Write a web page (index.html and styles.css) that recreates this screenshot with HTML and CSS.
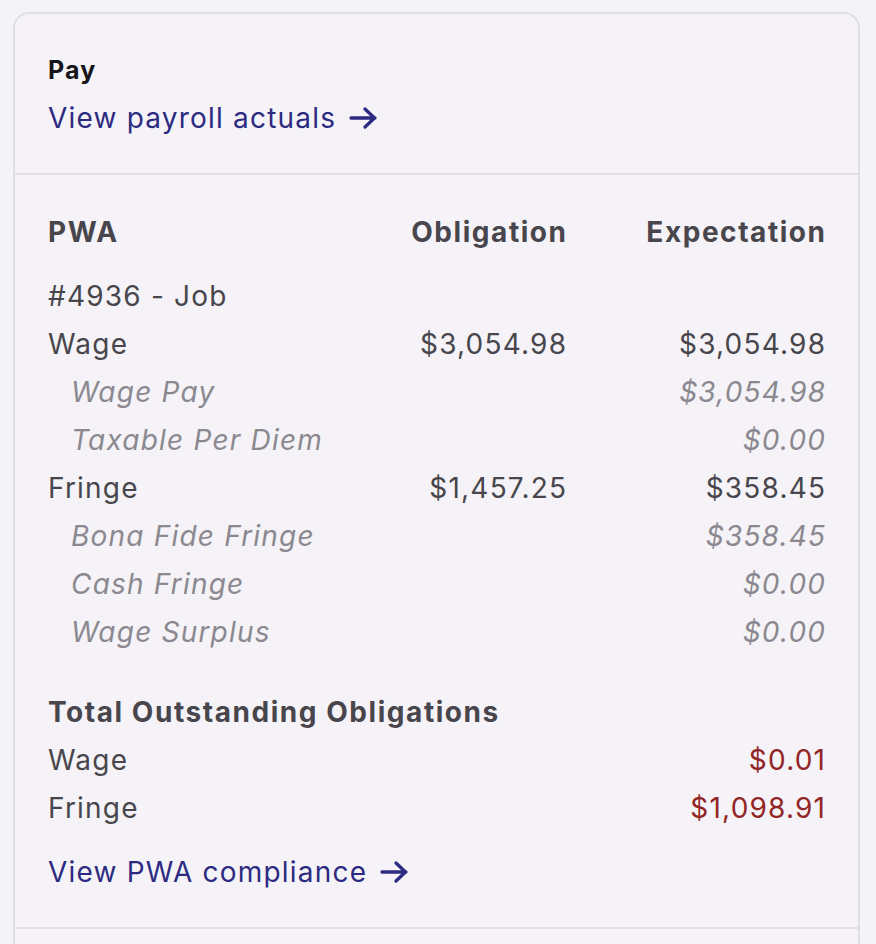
FILE: index.html
```html
<!DOCTYPE html>
<html>
<head>
<meta charset="utf-8">
<link rel="stylesheet" href="styles.css">
</head>
<body>
<div class="card">
  <section class="top">
    <div class="title">Pay</div>
    <a class="link" href="#">View payroll actuals
      <svg class="arrow" viewBox="0 0 30 30" width="30" height="30"><path d="M3 15h24M17 6l9.5 9-9.5 9" fill="none" stroke="currentColor" stroke-width="3.3" stroke-linecap="round" stroke-linejoin="round"/></svg>
    </a>
  </section>
  <section class="pwa">
    <div class="row head">
      <span>PWA</span><span class="num">Obligation</span><span class="num">Expectation</span>
    </div>
    <div class="rows">
      <div class="row"><span>#4936 - Job</span><span></span><span></span></div>
      <div class="row"><span>Wage</span><span class="num">$3,054.98</span><span class="num">$3,054.98</span></div>
      <div class="row sub"><span>Wage Pay</span><span></span><span class="num">$3,054.98</span></div>
      <div class="row sub"><span>Taxable Per Diem</span><span></span><span class="num">$0.00</span></div>
      <div class="row"><span>Fringe</span><span class="num">$1,457.25</span><span class="num">$358.45</span></div>
      <div class="row sub"><span>Bona Fide Fringe</span><span></span><span class="num">$358.45</span></div>
      <div class="row sub"><span>Cash Fringe</span><span></span><span class="num">$0.00</span></div>
      <div class="row sub"><span>Wage Surplus</span><span></span><span class="num">$0.00</span></div>
    </div>
    <div class="totals">
      <div class="row head"><span class="wide">Total Outstanding Obligations</span></div>
      <div class="row"><span>Wage</span><span></span><span class="num red">$0.01</span></div>
      <div class="row"><span>Fringe</span><span></span><span class="num red">$1,098.91</span></div>
    </div>
    <a class="link bottom-link" href="#">View PWA compliance
      <svg class="arrow" viewBox="0 0 30 30" width="30" height="30"><path d="M3 15h24M17 6l9.5 9-9.5 9" fill="none" stroke="currentColor" stroke-width="3.3" stroke-linecap="round" stroke-linejoin="round"/></svg>
    </a>
  </section>
  <section class="rest"></section>
</div>
</body>
</html>
```
FILE: styles.css
```css
html, body {
  margin: 0;
  padding: 0;
  background: #f4f3f6;
}
body {
  font-family: Inter, "Noto Sans", sans-serif;
  color: #48464c;
  font-size: 28px;
  line-height: 48px;
  letter-spacing: 1.2px;
  overflow: hidden;
  height: 944px;
}
.card {
  margin: 12px 0 0 13px;
  width: 847px;
  box-sizing: border-box;
  border: 2px solid #e1dfe4;
  border-radius: 16px 16px 0 0;
  background: #f5f3f7;
  height: 1000px;
}
.top {
  padding: 32px 33px 31px;
  border-bottom: 2px solid #e1dfe4;
  display: flex;
  flex-direction: column;
  align-items: flex-start;
}
.title {
  font-size: 25px;
  font-weight: 700;
  color: #161519;
  letter-spacing: 1.2px;
}
.link {
  color: #2d2a82;
  text-decoration: none;
  display: inline-flex;
  align-items: center;
  gap: 12px;
}
.arrow {
  display: block;
}
.pwa {
  padding: 33px 33px 31px;
  border-bottom: 2px solid #e1dfe4;
  display: flex;
  flex-direction: column;
  align-items: stretch;
}
.row {
  display: grid;
  grid-template-columns: 1fr 1fr 1fr;
  white-space: nowrap;
}
.num {
  text-align: right;
  margin-right: -1.2px;
}
.head {
  font-weight: 700;
  letter-spacing: 1.55px;
}
.head .num {
  margin-right: -1.55px;
}
.rows {
  margin-top: 16px;
}
.sub {
  font-style: italic;
  color: #8b898f;
}
.sub > span:first-child {
  padding-left: 23px;
}
.totals {
  margin-top: 32px;
}
.wide {
  grid-column: 1 / 4;
}
.red {
  color: #922525;
}
.bottom-link {
  margin-top: 16px;
  align-self: flex-start;
}
```
